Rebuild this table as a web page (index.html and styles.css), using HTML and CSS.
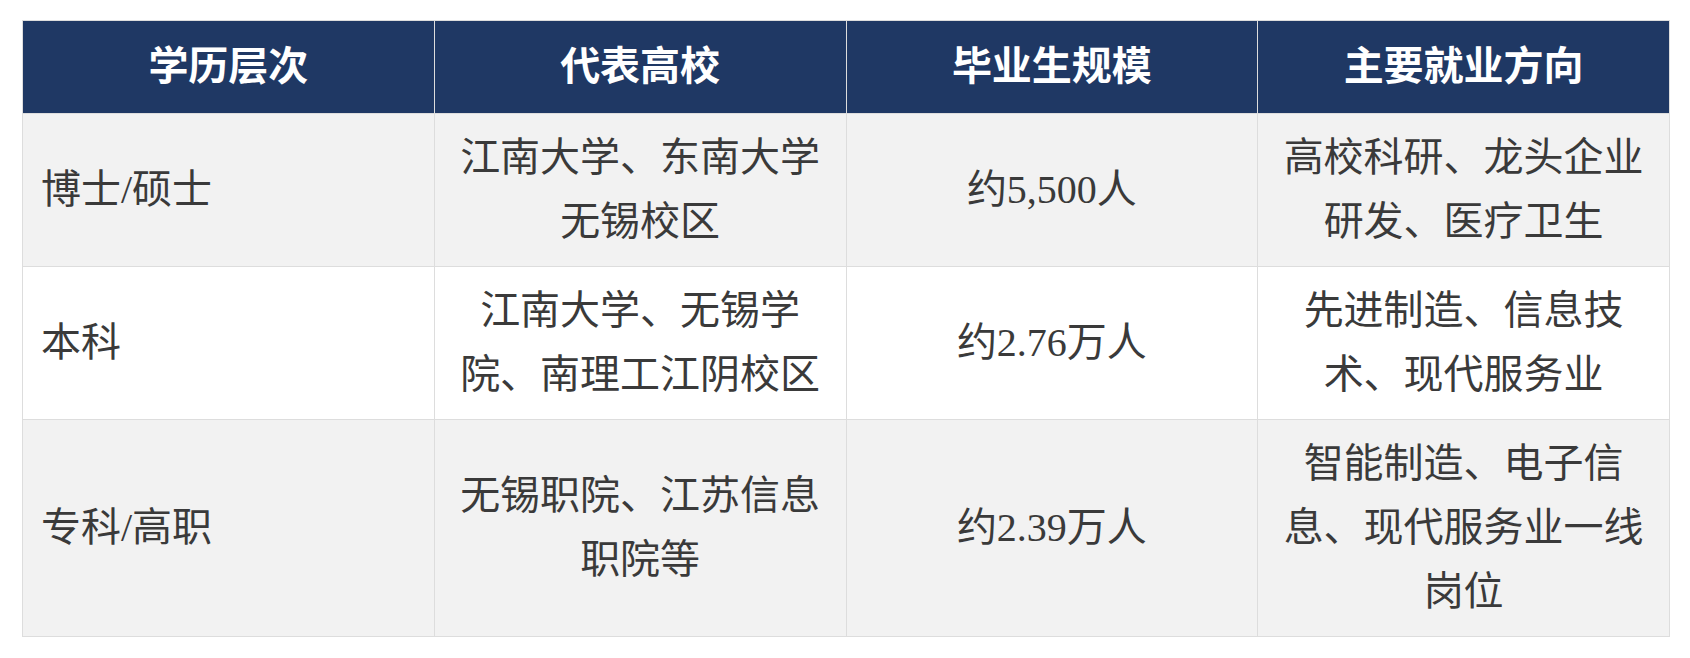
FILE: index.html
```
<!DOCTYPE html>
<html lang="zh-CN">
<head>
<meta charset="utf-8">
<title>无锡高校毕业生</title>
<link rel="stylesheet" href="styles.css">
</head>
<body>
<div class="wrap">
<table class="grad-table">
  <thead>
    <tr>
      <th>学历层次</th>
      <th>代表高校</th>
      <th>毕业生规模</th>
      <th>主要就业方向</th>
    </tr>
  </thead>
  <tbody>
    <tr class="alt">
      <td class="level">博士/硕士</td>
      <td>江南大学、东南大学无锡校区</td>
      <td>约5,500人</td>
      <td>高校科研、龙头企业研发、医疗卫生</td>
    </tr>
    <tr>
      <td class="level">本科</td>
      <td>江南大学、无锡学院、南理工江阴校区</td>
      <td>约2.76万人</td>
      <td>先进制造、信息技术、现代服务业</td>
    </tr>
    <tr class="alt">
      <td class="level">专科/高职</td>
      <td>无锡职院、江苏信息职院等</td>
      <td>约2.39万人</td>
      <td>智能制造、电子信息、现代服务业一线岗位</td>
    </tr>
  </tbody>
</table>
</div>
</body>
</html>
```
FILE: styles.css
```
html, body {
  margin: 0;
  padding: 0;
  background: #ffffff;
}

.wrap {
  padding: 20px 20px 20px 22px;
}

.grad-table {
  width: 100%;
  border-collapse: collapse;
  table-layout: fixed;
  font-family: "Liberation Serif", "Noto Sans CJK SC", serif;
  font-size: 40px;
  line-height: 64px;
  color: #3a3a3a;
}

.grad-table th,
.grad-table td {
  width: 25%;
  border: 1px solid #dddddd;
  padding: 12px 18px;
  text-align: center;
  vertical-align: middle;
}

.grad-table th {
  background: #1f3864;
  color: #ffffff;
  font-weight: bold;
  padding: 14px 18px;
}

.grad-table tr.alt td {
  background: #f2f2f2;
}

.grad-table td.level {
  text-align: left;
}
```
